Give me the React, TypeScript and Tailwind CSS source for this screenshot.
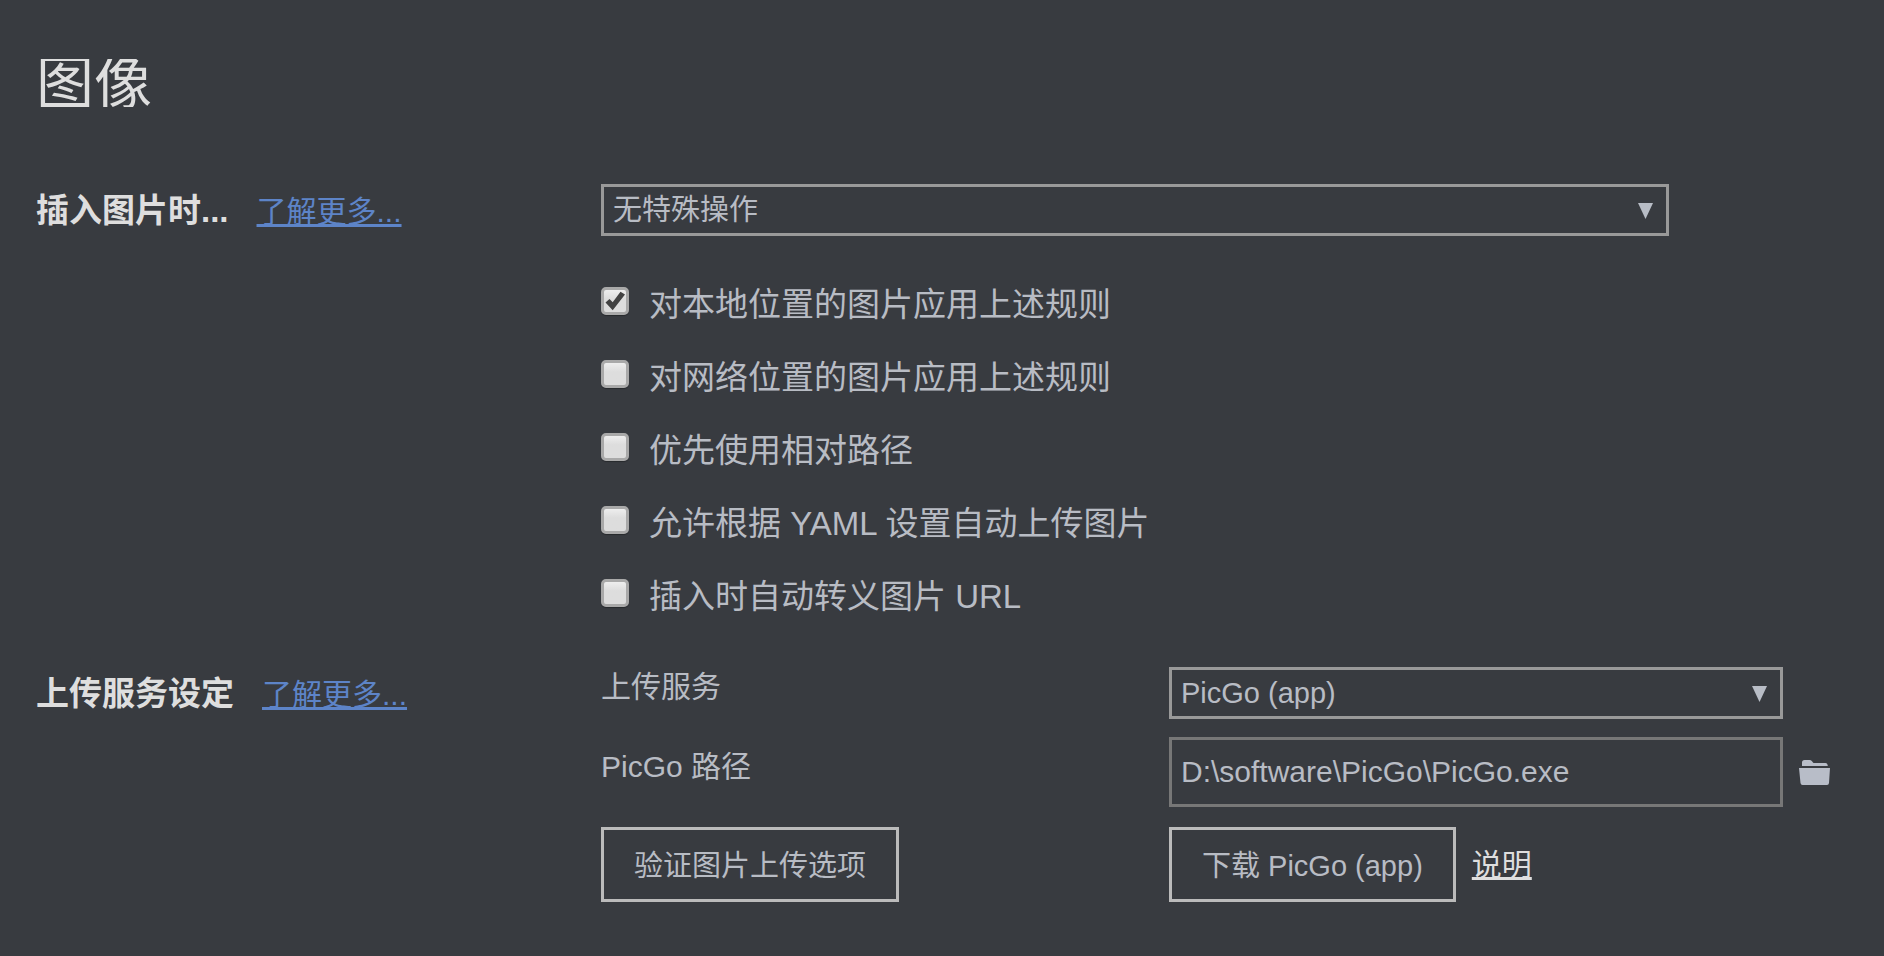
import { useState } from "react";
import type { ReactNode } from "react";

const checkboxOptions = [
  { id: "apply-local", label: "对本地位置的图片应用上述规则", checked: true },
  { id: "apply-network", label: "对网络位置的图片应用上述规则", checked: false },
  { id: "prefer-relative", label: "优先使用相对路径", checked: false },
  { id: "yaml-upload", label: "允许根据 YAML 设置自动上传图片", checked: false },
  { id: "escape-url", label: "插入时自动转义图片 URL", checked: false },
];

function SelectBox({ id, label, options }: { id: string; label: string; options: string[] }) {
  return (
    <div className="relative">
      <select
        id={id}
        aria-label={label}
        className="block h-[52px] w-full appearance-none rounded-none border-3 border-[#999999] bg-transparent px-[9px] text-[29px] leading-[40px] outline-none"
      >
        {options.map((option) => (
          <option key={option} className="bg-[#383b40]">
            {option}
          </option>
        ))}
      </select>
      <svg
        viewBox="0 0 15 16"
        className="pointer-events-none absolute top-[19px] right-4 h-4 w-[15px]"
        aria-hidden="true"
      >
        <path d="M0 0h15L7.5 16z" fill="#b8bdc6" />
      </svg>
    </div>
  );
}

function CheckOption({ id, label, checked }: { id: string; label: string; checked: boolean }) {
  const [on, setOn] = useState(checked);
  return (
    <div className="flex h-[73px] items-start gap-5">
      <span className="relative mt-1 block h-7 w-7 shrink-0">
        <input
          id={id}
          type="checkbox"
          checked={on}
          onChange={(event) => setOn(event.target.checked)}
          className="block h-7 w-7 appearance-none rounded-[5px] border-[3px] border-[#a9a9a9] bg-linear-to-b from-[#eeeeee] to-[#dddddd] to-40% shadow-[0_1px_1px_rgba(0,0,0,0.3)]"
        />
        {on && (
          <svg viewBox="0 0 28 28" className="pointer-events-none absolute inset-0 h-7 w-7" aria-hidden="true">
            <path d="M4.500 15.500l4-3.500 3.200 3.200L19.500 4.800l4.500 2.800-12.300 15.600z" fill="#424242" />
          </svg>
        )}
      </span>
      <label htmlFor={id} className="text-[33px] leading-[44px]">
        {label}
      </label>
    </div>
  );
}

function Section({ title, children }: { title: string; children: ReactNode }) {
  return (
    <section className="grid grid-cols-[565px_1fr]">
      <div className="flex items-baseline gap-7 self-start">
        <h2 className="text-[33px] leading-[53px] font-bold text-[#dedede]">{title}</h2>
        <a
          href="#more"
          className="text-[30px] leading-[53px] text-[#5d84c8] underline decoration-[3px] underline-offset-[2px] [text-decoration-skip-ink:none]"
        >
          了解更多...
        </a>
      </div>
      {children}
    </section>
  );
}

export default function App() {
  return (
    <main
      lang="zh-CN"
      className="min-h-screen bg-[#383b40] pt-[59px] pl-9 font-['Liberation_Sans','Noto_Sans_CJK_SC',sans-serif] text-[#b8bcc4]"
    >
      <h1 className="h-12 overflow-hidden text-[58px] leading-[50px] text-[#dedede]">图像</h1>

      <div className="mt-[77px] flex flex-col gap-[19px]">
        <Section title="插入图片时...">
          <div className="pr-[215px]">
            <SelectBox id="insert-action" label="插入图片时" options={["无特殊操作", "复制图片到当前文件夹", "上传图片"]} />
            <div className="mt-[47px]">
              {checkboxOptions.map((option) => (
                <CheckOption key={option.id} {...option} />
              ))}
            </div>
          </div>
        </Section>

        <Section title="上传服务设定">
          <div className="grid grid-cols-[568px_1fr] pr-[101px]">
            <label htmlFor="service" className="text-[30px] leading-[40px]">
              上传服务
            </label>
            <SelectBox id="service" label="上传服务" options={["PicGo (app)", "PicGo-Core (command line)"]} />

            <label htmlFor="picgo-path" className="mt-7 text-[30px] leading-[40px]">
              PicGo 路径
            </label>
            <div className="mt-[18px] -mr-[47px] flex items-center gap-4">
              <input
                id="picgo-path"
                type="text"
                defaultValue="D:\software\PicGo\PicGo.exe"
                className="h-[70px] min-w-0 flex-1 border-3 border-[#777777] bg-transparent px-[9px] text-[30px] outline-none"
              />
              <button type="button" aria-label="选择文件夹" className="shrink-0">
                <svg viewBox="0 0 31 25" className="block h-[25px] w-[31px]" aria-hidden="true">
                  <path
                    d="M3 6V2.5Q3 0 5.500 0H10.500Q12 0 13 1.200L14.200 2.700Q14.700 3 15.500 3H26.500Q28.500 3 28.800 6Z M0 8H31L30 23Q29.800 25 28 25H3.500Q1.800 25 1.500 23Z"
                    fill="#b8bdc8"
                  />
                </svg>
              </button>
            </div>

            <div className="mt-5">
              <button type="button" className="h-[75px] border-3 border-[#bbbbbb] px-[30px] pt-1 text-[29px]">
                验证图片上传选项
              </button>
            </div>
            <div className="mt-5 flex items-center gap-4">
              <button type="button" className="h-[75px] border-3 border-[#bbbbbb] px-[30px] pt-1 text-[29px]">
                下载 PicGo (app)
              </button>
              <a
                href="#help"
                className="text-[30px] text-[#dedede] underline decoration-[3px] underline-offset-[2px] [text-decoration-skip-ink:none]"
              >
                说明
              </a>
            </div>
          </div>
        </Section>
      </div>
    </main>
  );
}
